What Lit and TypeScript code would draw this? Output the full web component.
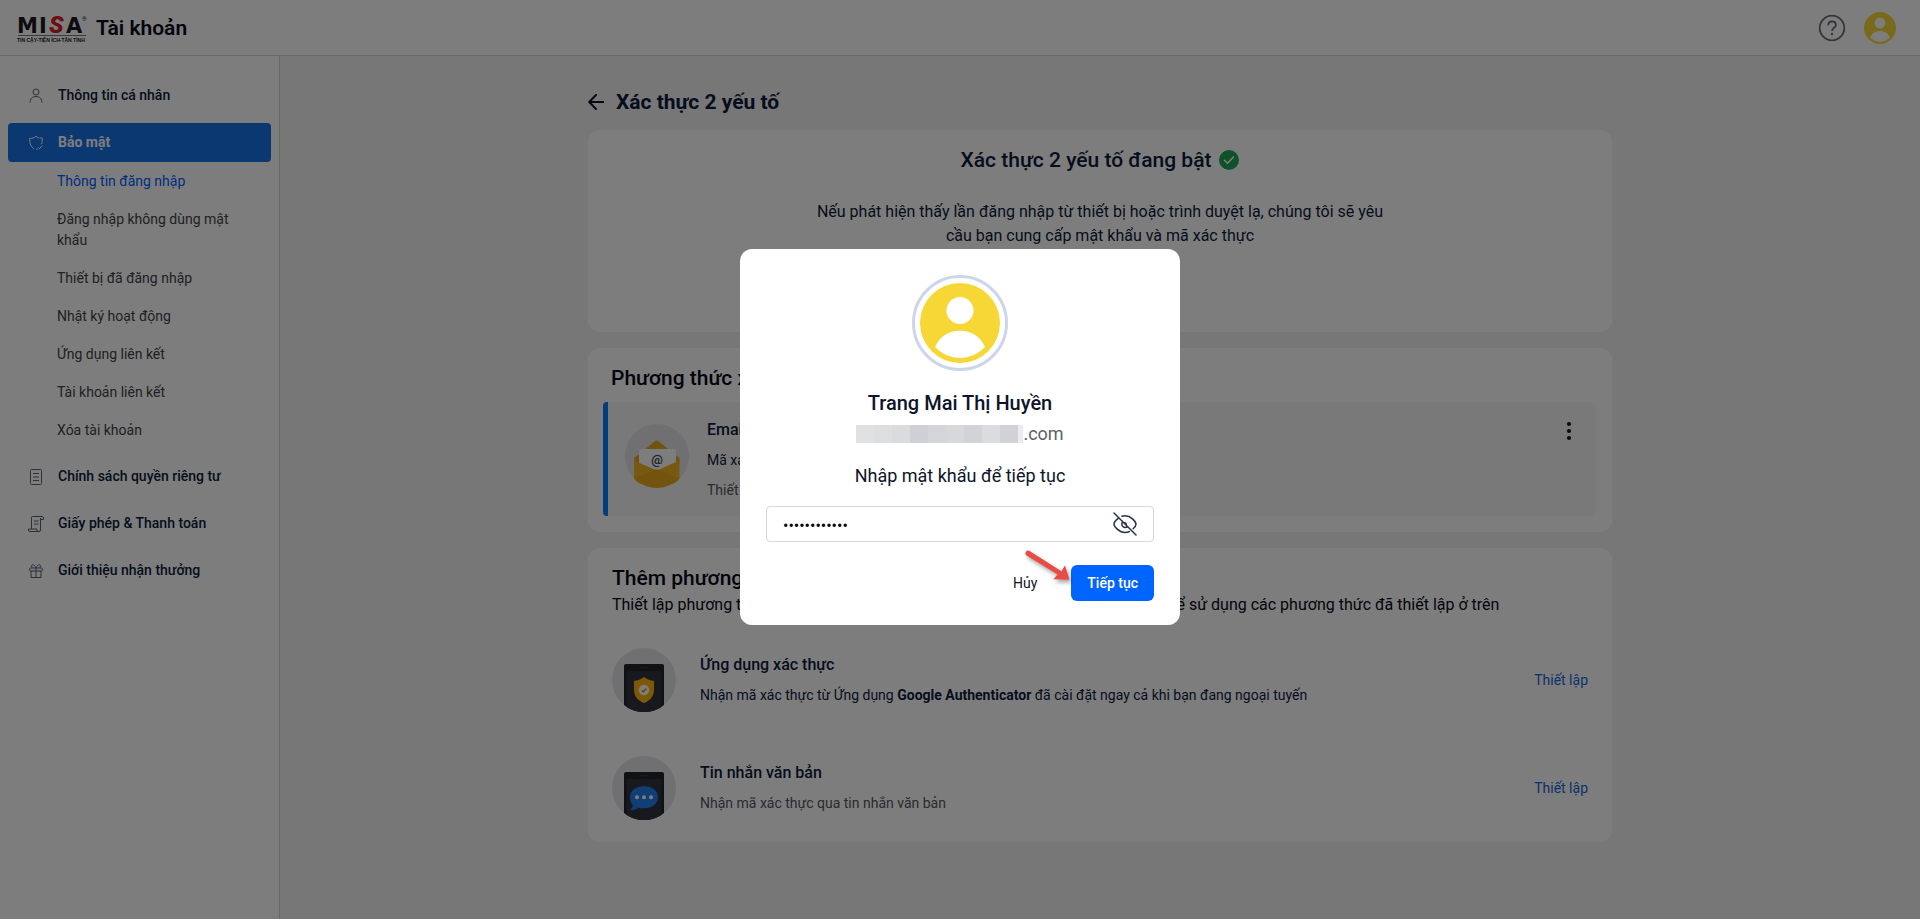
import { LitElement, html, css, svg, nothing } from "lit";
import { customElement, property, state } from "lit/decorators.js";
import { classMap } from "lit/directives/class-map.js";

const icons = {
  user: svg`<circle cx="10" cy="6" r="3"/><path d="M4 16.500c0-3.600 2.400-6 6-6s6 2.400 6 6"/>`,
  shield: svg`<path d="M13.500 5.200C12.300 5 11 4.300 10 3.200 8.300 5 6 5.500 3.800 5.300c-.5 4.200.7 8 4.200 10.500M10 16.600c.7-.2 1.200-.5 1.700-.8M14 4.900l2.200.3c.2 2.300 0 4.300-.8 6M12.200 14.500l1.300 1.200 2.700-3"/>`,
  doc: svg`<rect x="4.500" y="2.500" width="11" height="15" rx="1"/><path d="M7 6.500h6M7 10h6M7 13.500h6"/>`,
  scroll: svg`<path d="M5.500 15V3.500a1 1 0 0 1 1-1H16M16 2.500a1.500 1.500 0 0 1 1.500 1.500v1.500h-3M14.500 4v12a1.500 1.500 0 0 1-1.500 1.500H4A1.500 1.500 0 0 1 2.500 16v-1H11v1a1.500 1.500 0 0 0 1.500 1.500M8 7h4.500M8 10h4.500"/>`,
  gift: svg`<path d="M4.500 7h11a.8.8 0 0 1 .8.8v1.400a.8.8 0 0 1-.8.8h-11a.8.8 0 0 1-.8-.8V7.800a.8.8 0 0 1 .8-.8zM5 10v6.500h10V10M10 7v9.500M10 7C9 4.600 7.800 3.500 6.500 3.700 5.200 4 5.300 6 6.500 7M10 7c1-2.400 2.200-3.500 3.500-3.300C14.800 4 14.700 6 13.500 7"/>`,
};
type IconName = keyof typeof icons;

interface MenuEntry {
  label: string;
  icon: IconName;
  active?: boolean;
  children?: { label: string; current?: boolean }[];
}

const menu: MenuEntry[] = [
  { label: "Thông tin cá nhân", icon: "user" },
  {
    label: "Bảo mật",
    icon: "shield",
    active: true,
    children: [
      { label: "Thông tin đăng nhập", current: true },
      { label: "Đăng nhập không dùng mật khẩu" },
      { label: "Thiết bị đã đăng nhập" },
      { label: "Nhật ký hoạt động" },
      { label: "Ứng dụng liên kết" },
      { label: "Tài khoản liên kết" },
      { label: "Xóa tài khoản" },
    ],
  },
  { label: "Chính sách quyền riêng tư", icon: "doc" },
  { label: "Giấy phép & Thanh toán", icon: "scroll" },
  { label: "Giới thiệu nhận thưởng", icon: "gift" },
];

const base = css`
  :host, * { box-sizing: border-box; }
  h1, h2, h3, p { margin: 0; }
  a { text-decoration: none; color: inherit; }
  button, input { font: inherit; color: inherit; background: none; border: 0; margin: 0; padding: 0; }
  button { cursor: pointer; }
  svg { display: block; flex: none; }
`;

@customElement("user-avatar")
export class UserAvatar extends LitElement {
  static styles = css`
    :host { display: block; }
    svg { display: block; width: 100%; height: 100%; }
  `;
  render() {
    return html`<svg viewBox="0 0 80 80" aria-hidden="true">
      <circle cx="40" cy="40" r="40" fill="#f6d736"/>
      <circle cx="40" cy="27.500" r="13.500" fill="#fff"/>
      <path d="M15 64C20 53 29 47.700 40 47.700S60 53 65 64C58 71 49 75 40 75S22 71 15 64z" fill="#fff"/>
    </svg>`;
  }
}

@customElement("app-header")
export class AppHeader extends LitElement {
  static styles = [base, css`
    :host { display: flex; align-items: center; justify-content: space-between; height: 56px; padding: 0 24px 0 16px; background: #fff; border-bottom: 1px solid #d5d5d5; }
    .brand, .tools { display: flex; align-items: center; }
    .brand { gap: 8px; }
    .tools { gap: 18px; }
    .title { font-size: 21px; line-height: 28px; font-weight: 600; color: #050a18; }
    .avatar { width: 32px; height: 32px; }
    .mark { font: 700 21px "DejaVu Sans", sans-serif; }
    .slash { font: italic 900 24px Roboto, sans-serif; }
    .reg { font: 500 6px Roboto, sans-serif; }
    .tag { font: 700 5px "Liberation Sans", sans-serif; }
  `];
  render() {
    return html`
      <a class="brand" href="#">
        <svg width="72" height="40" viewBox="0 0 72 40" role="img" aria-label="MISA">
          <g fill="#1d1a1d">
            <text class="mark" x="1" y="25">M</text>
            <text class="mark" x="23" y="25">I</text>
            <text class="mark" x="50" y="25">A</text>
            <text class="reg" x="66" y="13">®</text>
            <path d="M2 27h68v1H2z" opacity=".6"/>
            <text class="tag" x="1" y="34">TIN CẬY-TIỆN ÍCH-TẬN TÌNH</text>
          </g>
          <text class="slash" x="33" y="25" fill="#d8202a">S</text>
        </svg>
        <span class="title">Tài khoản</span>
      </a>
      <div class="tools">
        <button aria-label="Trợ giúp">
          <svg width="28" height="28" viewBox="0 0 28 28" fill="none" stroke="#6c6f7c" stroke-width="1.800">
            <circle cx="14" cy="14" r="12.300"/>
            <path d="M10.200 11.200c.1-2.200 1.700-3.700 3.900-3.700 2.100 0 3.800 1.400 3.800 3.400 0 2.800-3.800 3-3.800 6"/>
            <circle cx="14" cy="20" r="1.200" fill="#6c6f7c" stroke="none"/>
          </svg>
        </button>
        <user-avatar class="avatar"></user-avatar>
      </div>`;
  }
}

@customElement("side-menu")
export class SideMenu extends LitElement {
  static styles = [base, css`
    :host { display: block; background: #fff; border-right: 1px solid #d5d5d5; padding: 20px 8px; }
    nav { display: flex; flex-direction: column; gap: 8px; }
    .item { display: flex; align-items: center; gap: 12px; height: 39px; padding: 0 18px; border-radius: 4px; font-size: 14px; line-height: 21px; font-weight: 500; color: #0d1c3d; }
    .item svg { color: #59627a; }
    .item.active { background: #1a73e8; color: #fff; font-weight: 700; }
    .item.active svg { color: #fff; }
    .sub { display: flex; flex-direction: column; }
    .sub a { padding: 9px 20px 8px 49px; font-size: 14px; line-height: 21px; color: #42444a; }
    .sub a.current { color: #0061ff; }
    .group { display: flex; flex-direction: column; }
  `];
  render() {
    return html`<nav aria-label="Tài khoản">
      ${menu.map((m) => html`<div class="group">
        <a href="#" class=${classMap({ item: true, active: !!m.active })}>
          <svg width="20" height="20" viewBox="0 0 20 20" fill="none" stroke="currentColor" stroke-width="1">${icons[m.icon]}</svg>
          ${m.label}
        </a>
        ${m.children
          ? html`<div class="sub">${m.children.map((c) => html`<a href="#" class=${classMap({ current: !!c.current })}>${c.label}</a>`)}</div>`
          : nothing}
      </div>`)}
    </nav>`;
  }
}

const phone = svg`
  <path d="M12 18a2 2 0 0 1 2-2h36a2 2 0 0 1 2 2v39A32 32 0 0 1 12 57z" fill="#212329"/>
  <path d="M14.500 23h35v36A32 32 0 0 1 14.500 59z" fill="#30343f"/>
  <rect x="27" y="19" width="10" height="1.500" rx=".7" fill="#33363d"/>`;

const pictures = {
  email: svg`
    <path d="M9.300 34L29.500 17.500q2.200-2 4.400 0L54.300 34V40H9.300z" fill="#e5a91c"/>
    <path d="M14 27a2 2 0 0 1 2-2h33a2 2 0 0 1 2 2v20H14z" fill="#fff"/>
    <path d="M9 34.500v19c0 3 4 5 7 6.500L31 46 12 38q-2.500-1.500-3-3.500zM54.500 34.500v19c0 3-4 5-7 6.500L33 46l18-8q3-1.500 3.500-3.500z" fill="#f3b61f"/>
    <path d="M9.500 54.500L29 46.300q2.800-1.800 5.600 0l19.500 8.200A32 32 0 0 1 32 64 32 32 0 0 1 9.500 54.500z" fill="#eaa91d"/>
    <text class="at" x="32" y="40" text-anchor="middle" fill="#3b4251">@</text>`,
  app: svg`${phone}
    <path d="M32 29c3 2.500 6.200 3.600 10 4v9c0 6.500-4.500 11-10 13-5.500-2-10-6.500-10-13v-9c3.800-.4 7-1.500 10-4z" fill="#ffb60a"/>
    <circle cx="32" cy="42" r="5.300" fill="#fff"/>
    <path d="M29.800 42.200l1.600 1.600 3-3.200" fill="none" stroke="#e09a00" stroke-width="1.500"/>`,
  sms: svg`${phone}
    <path d="M32 30.300c8 0 14 4.600 14 11s-6 11-14 11c-2 0-4-.2-5.700-.9C24 53.500 21 54.200 17.800 54c2-1.400 3-3 3-4.800-1.800-2-2.800-4.800-2.800-7.900 0-6.400 6-11 14-11z" fill="#2182f0"/>
    <circle cx="25" cy="41.300" r="2" fill="#fff"/><circle cx="32" cy="41.300" r="2" fill="#fff"/><circle cx="39" cy="41.300" r="2" fill="#fff"/>`,
};

@customElement("method-picture")
export class MethodPicture extends LitElement {
  @property() name: keyof typeof pictures = "email";
  static styles = css`
    :host { display: block; flex: none; }
    svg { display: block; }
    .at { font: 500 13px Roboto, sans-serif; }
  `;
  render() {
    return html`<svg width="64" height="64" viewBox="0 0 64 64" aria-hidden="true">
      <circle cx="32" cy="32" r="32" fill="#e4e5e9"/>${pictures[this.name]}
    </svg>`;
  }
}

@customElement("two-factor-page")
export class TwoFactorPage extends LitElement {
  static styles = [base, css`
    :host { display: block; padding: 33px 24px 24px; background: #f2f2f3; color: #0d1c3d; }
    .column { max-width: 1024px; margin: 0 auto; display: flex; flex-direction: column; gap: 16px; }
    .back { display: flex; align-items: center; gap: 12px; height: 25px; }
    .back h1 { font-size: 21px; line-height: 28px; font-weight: 700; }
    .card { background: #fff; border-radius: 12px; }
    .status { display: flex; flex-direction: column; align-items: center; padding: 16px 24px 24px; text-align: center; }
    .status h2 { display: flex; align-items: center; gap: 8px; font-size: 21px; line-height: 28px; font-weight: 500; }
    .status p { max-width: 590px; margin-top: 26px; font-size: 16px; line-height: 24px; }
    .status button { height: 36px; margin-top: 24px; padding: 0 16px; border-radius: 6px; border: 1px solid #d5d5d5; font-size: 14px; }
    .heading { font-size: 21px; line-height: 28px; font-weight: 500; color: #050a18; }
    .methods { padding: 16px 15px; }
    .methods .heading { padding-left: 8px; }
    .method { display: flex; align-items: flex-start; gap: 18px; margin-top: 10px; padding: 18px 18px 16px 17px; border-left: 5px solid #0a7cff; border-radius: 4px 8px 8px 4px; background: #f7f7f8; }
    .method method-picture { margin-top: 4px; }
    .texts { display: flex; flex-direction: column; gap: 10px; flex: 1; min-width: 0; }
    .name { font-size: 16px; line-height: 20px; font-weight: 500; }
    .line { font-size: 14px; line-height: 20px; }
    .muted { color: #55585f; }
    .more { padding: 16px 24px 22px; }
    .more .sub { font-size: 16px; line-height: 26px; color: #050a18; }
    .options { display: flex; flex-direction: column; gap: 44px; margin-top: 30px; }
    .option { display: flex; align-items: center; gap: 24px; }
    .option a { font-size: 14px; line-height: 20px; color: #1a66d9; }
    b { font-weight: 700; }
  `];
  render() {
    return html`<main class="column">
      <div class="back">
        <button aria-label="Quay lại">
          <svg width="16" height="18" viewBox="0 0 16 18" fill="none" stroke="#0b1222" stroke-width="2" stroke-linejoin="round" stroke-linecap="round"><path d="M15.500 9H1.500M8 2L1.200 9 8 16"/></svg>
        </button>
        <h1>Xác thực 2 yếu tố</h1>
      </div>
      <section class="card status">
        <h2>Xác thực 2 yếu tố đang bật
          <svg width="20" height="20" viewBox="0 0 20 20" aria-hidden="true"><circle cx="10" cy="10" r="10" fill="#1fa850"/><path d="M5.500 10.300l3 3 6-6.300" fill="none" stroke="#fff" stroke-width="1.600" stroke-linecap="round" stroke-linejoin="round"/></svg>
        </h2>
        <p>Nếu phát hiện thấy lần đăng nhập từ thiết bị hoặc trình duyệt lạ, chúng tôi sẽ yêu cầu bạn cung cấp mật khẩu và mã xác thực</p>
        <button>Tắt</button>
      </section>
      <section class="card methods">
        <h2 class="heading">Phương thức xác thực</h2>
        <div class="method">
          <method-picture name="email"></method-picture>
          <div class="texts">
            <h3 class="name">Email</h3>
            <p class="line">Mã xác thực được gửi qua email</p>
            <p class="line muted">Thiết lập mặc định</p>
          </div>
          <button aria-label="Tùy chọn">
            <svg width="20" height="32" viewBox="0 0 20 32" fill="#111827"><circle cx="10" cy="4" r="2.100"/><circle cx="10" cy="11" r="2.100"/><circle cx="10" cy="18" r="2.100"/></svg>
          </button>
        </div>
      </section>
      <section class="card more">
        <h2 class="heading">Thêm phương thức xác thực</h2>
        <p class="sub">Thiết lập phương thức xác thực bổ sung để dùng trong trường hợp bạn không thể sử dụng các phương thức đã thiết lập ở trên</p>
        <div class="options">
          <div class="option">
            <method-picture name="app"></method-picture>
            <div class="texts">
              <h3 class="name">Ứng dụng xác thực</h3>
              <p class="line">Nhận mã xác thực từ Ứng dụng <b>Google Authenticator</b> đã cài đặt ngay cả khi bạn đang ngoại tuyến</p>
            </div>
            <a href="#">Thiết lập</a>
          </div>
          <div class="option">
            <method-picture name="sms"></method-picture>
            <div class="texts">
              <h3 class="name">Tin nhắn văn bản</h3>
              <p class="line muted">Nhận mã xác thực qua tin nhắn văn bản</p>
            </div>
            <a href="#">Thiết lập</a>
          </div>
        </div>
      </section>
    </main>`;
  }
}

const mosaic = ["#e0e1e3", "#dddee0", "#dadbdd", "#cfd0d5", "#d4d5d9", "#d7d8da", "#d2d3d8", "#dbdcde", "#d1d2d7"];

@customElement("password-dialog")
export class PasswordDialog extends LitElement {
  @state() private visible = false;
  static styles = [base, css`
    :host { position: fixed; inset: 0; display: flex; align-items: center; justify-content: center; padding-bottom: 45px; background: rgba(0, 0, 0, .51); }
    .dialog { position: relative; width: 440px; padding: 26px 26px 24px; border-radius: 12px; background: #fff; color: #0d142b; display: flex; flex-direction: column; }
    .ring { align-self: center; width: 96px; height: 96px; padding: 5px; border: 3px solid #cdd5ea; border-radius: 50%; }
    .ring user-avatar { width: 80px; height: 80px; }
    h2 { margin-top: 20px; text-align: center; font-size: 20px; line-height: 24px; font-weight: 500; }
    .email { display: flex; align-items: center; justify-content: center; margin-top: 7px; font-size: 18px; line-height: 24px; color: #5c5f6b; }
    label { margin-top: 18px; text-align: center; font-size: 18px; line-height: 24px; }
    .field { display: flex; align-items: center; height: 36px; margin-top: 18px; padding: 0 16px; border: 1px solid #d5d7dc; border-radius: 4px; }
    .field input { flex: 1; min-width: 0; height: 100%; padding-top: 2px; outline: 0; font-size: 16px; color: #050505; }
    .actions { display: flex; justify-content: flex-end; gap: 18px; margin-top: 23px; }
    .actions button { height: 36px; padding: 0 16px; border-radius: 6px; font-size: 14px; line-height: 20px; }
    .actions .primary { background: #0065ff; color: #fff; font-weight: 500; }
    .arrow { position: absolute; left: 280px; top: 298px; filter: drop-shadow(2px 3px 2px rgba(0, 0, 0, .35)); pointer-events: none; }
  `];
  render() {
    return html`<form class="dialog" role="dialog" aria-modal="true" @submit=${(e: Event) => e.preventDefault()}>
      <div class="ring"><user-avatar></user-avatar></div>
      <h2>Trang Mai Thị Huyền</h2>
      <div class="email">
        <svg width="167" height="18" viewBox="0 0 167 18" shape-rendering="crispEdges" aria-hidden="true">
          <rect width="167" height="18" fill="#ececee"/>
          ${mosaic.map((c, i) => svg`<rect x=${i * 18} width="18" height="18" fill=${c}/>`)}
        </svg><span>.com</span>
      </div>
      <label for="pw">Nhập mật khẩu để tiếp tục</label>
      <div class="field">
        <input id="pw" type=${this.visible ? "text" : "password"} value="matkhau12345" autocomplete="off">
        <button type="button" aria-label="Hiện mật khẩu" @click=${() => (this.visible = !this.visible)}>
          <svg width="24" height="24" viewBox="0 0 24 24" fill="none" stroke="#27314a" stroke-width="1.500" stroke-linecap="round">
            <path d="M1 1l22 22M5.500 6.200C3.600 7.700 1 10.800 1 12.200c0 2 5 8.300 11 8.300 1.700 0 3.200-.4 4.500-1M9 4.200c1-.3 2-.4 3-.4 6 0 11 6 11 8.400 0 1.200-1.300 3-2.900 4.500M9.200 10.500c-1.100 2.500.6 5 3 5 1 0 1.900-.4 2.500-1M12 10.800c.8.200 1.200.8 1.300 1.500"/>
          </svg>
        </button>
      </div>
      <div class="actions">
        <button type="button">Hủy</button>
        <button class="primary">Tiếp tục</button>
      </div>
      <svg class="arrow" width="52" height="36" viewBox="0 0 52 36" aria-hidden="true">
        <path d="M9.200 3.700L41.500 24.200l3.500-6 4.500 14.500-16.200-.5 4.300-4.600L6.500 8.500a2.800 2.800 0 0 1 2.700-4.800z" fill="#e84c45"/>
      </svg>
    </form>`;
  }
}

@customElement("app-root")
export class AppRoot extends LitElement {
  static styles = css`
    :host { display: grid; grid-template: auto 1fr / 280px 1fr; min-height: 100vh; font-family: Roboto, "Open Sans", sans-serif; }
    app-header { grid-column: 1 / -1; }
  `;
  render() {
    return html`
      <app-header></app-header>
      <side-menu></side-menu>
      <two-factor-page></two-factor-page>
      <password-dialog></password-dialog>`;
  }
}
